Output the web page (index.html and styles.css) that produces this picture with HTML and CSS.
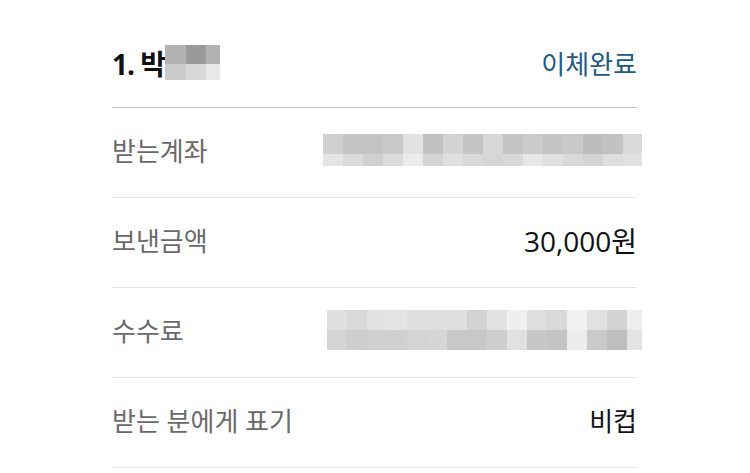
FILE: index.html
```html
<!DOCTYPE html>
<html lang="ko">
<head>
    <meta charset="UTF-8">
    <meta name="viewport" content="width=device-width, initial-scale=1.0">
    <title>이체 결과</title>
    <link rel="stylesheet" href="styles.css">
</head>
<body>

<div class="transfer">
    <div class="transfer-head">
        <div class="recipient">
            <span class="recipient-name">1. 박</span>
            <!-- masked name -->
            <svg class="mask mask-name" width="55" height="35" viewBox="0 0 55 35" shape-rendering="crispEdges">
                <rect x="0" y="0" width="21" height="19" fill="#b3b3b3"/>
                <rect x="21" y="0" width="20" height="19" fill="#9a9a9a"/>
                <rect x="41" y="0" width="14" height="19" fill="#b3b3b3"/>
                <rect x="0" y="19" width="21" height="16" fill="#cacaca"/>
                <rect x="21" y="19" width="20" height="16" fill="#d7d7d7"/>
                <rect x="41" y="19" width="14" height="16" fill="#e8e8e8"/>
            </svg>
        </div>
        <span class="status">이체완료</span>
    </div>

    <div class="detail-row">
        <span class="label">받는계좌</span>
        <!-- masked account number -->
        <svg class="mask mask-account" width="319" height="32" viewBox="0 0 319 32" shape-rendering="crispEdges">
            <g>
                <rect x="0" y="0" width="20" height="20" fill="#cfcfcf"/>
                <rect x="20" y="0" width="20" height="20" fill="#c4c4c4"/>
                <rect x="40" y="0" width="20" height="20" fill="#c3c3c3"/>
                <rect x="60" y="0" width="20" height="20" fill="#c9c9c9"/>
                <rect x="80" y="0" width="20" height="20" fill="#e2e2e2"/>
                <rect x="100" y="0" width="20" height="20" fill="#c1c1c1"/>
                <rect x="120" y="0" width="20" height="20" fill="#d3d3d3"/>
                <rect x="140" y="0" width="20" height="20" fill="#c4c4c4"/>
                <rect x="160" y="0" width="20" height="20" fill="#d7d7d7"/>
                <rect x="180" y="0" width="20" height="20" fill="#c4c4c4"/>
                <rect x="200" y="0" width="20" height="20" fill="#cbcbcb"/>
                <rect x="220" y="0" width="20" height="20" fill="#c4c4c4"/>
                <rect x="240" y="0" width="20" height="20" fill="#c9c9c9"/>
                <rect x="260" y="0" width="20" height="20" fill="#bdbdbd"/>
                <rect x="280" y="0" width="20" height="20" fill="#c2c2c2"/>
                <rect x="300" y="0" width="19" height="20" fill="#dadada"/>
            </g>
            <g>
                <rect x="0" y="20" width="20" height="12" fill="#e4e4e4"/>
                <rect x="20" y="20" width="20" height="12" fill="#dadada"/>
                <rect x="40" y="20" width="20" height="12" fill="#cfcfcf"/>
                <rect x="60" y="20" width="20" height="12" fill="#dcdcdc"/>
                <rect x="80" y="20" width="20" height="12" fill="#ebebeb"/>
                <rect x="100" y="20" width="20" height="12" fill="#d4d4d4"/>
                <rect x="120" y="20" width="20" height="12" fill="#dfdfdf"/>
                <rect x="140" y="20" width="20" height="12" fill="#d9d9d9"/>
                <rect x="160" y="20" width="20" height="12" fill="#d6d6d6"/>
                <rect x="180" y="20" width="20" height="12" fill="#d8d8d8"/>
                <rect x="200" y="20" width="20" height="12" fill="#e7e7e7"/>
                <rect x="220" y="20" width="20" height="12" fill="#e0e0e0"/>
                <rect x="240" y="20" width="20" height="12" fill="#d8d8d8"/>
                <rect x="260" y="20" width="20" height="12" fill="#d3d3d3"/>
                <rect x="280" y="20" width="20" height="12" fill="#dedede"/>
                <rect x="300" y="20" width="19" height="12" fill="#e2e2e2"/>
            </g>
        </svg>
    </div>

    <div class="detail-row">
        <span class="label">보낸금액</span>
        <span class="value amount">30,000원</span>
    </div>

    <div class="detail-row">
        <span class="label">수수료</span>
        <!-- masked fee -->
        <svg class="mask mask-fee" width="315" height="40" viewBox="0 0 315 40" shape-rendering="crispEdges">
            <g>
                <rect x="0" y="0" width="20" height="20" fill="#e0e0e0"/>
                <rect x="20" y="0" width="20" height="20" fill="#d9d9d9"/>
                <rect x="40" y="0" width="20" height="20" fill="#e2e2e2"/>
                <rect x="60" y="0" width="20" height="20" fill="#e3e3e3"/>
                <rect x="80" y="0" width="20" height="20" fill="#dfdfdf"/>
                <rect x="100" y="0" width="20" height="20" fill="#dedede"/>
                <rect x="120" y="0" width="20" height="20" fill="#dfdfdf"/>
                <rect x="140" y="0" width="20" height="20" fill="#d2d2d2"/>
                <rect x="160" y="0" width="20" height="20" fill="#e2e2e2"/>
                <rect x="180" y="0" width="20" height="20" fill="#efefef"/>
                <rect x="200" y="0" width="20" height="20" fill="#dedede"/>
                <rect x="220" y="0" width="20" height="20" fill="#d9d9d9"/>
                <rect x="240" y="0" width="20" height="20" fill="#f0f0f0"/>
                <rect x="260" y="0" width="20" height="20" fill="#e1e1e1"/>
                <rect x="280" y="0" width="20" height="20" fill="#d3d3d3"/>
                <rect x="300" y="0" width="15" height="20" fill="#ededed"/>
            </g>
            <g>
                <rect x="0" y="20" width="20" height="20" fill="#d4d4d4"/>
                <rect x="20" y="20" width="20" height="20" fill="#cecece"/>
                <rect x="40" y="20" width="20" height="20" fill="#cfcfcf"/>
                <rect x="60" y="20" width="20" height="20" fill="#cfcfcf"/>
                <rect x="80" y="20" width="20" height="20" fill="#d4d4d4"/>
                <rect x="100" y="20" width="20" height="20" fill="#d6d6d6"/>
                <rect x="120" y="20" width="20" height="20" fill="#c8c8c8"/>
                <rect x="140" y="20" width="20" height="20" fill="#c8c8c8"/>
                <rect x="160" y="20" width="20" height="20" fill="#cecece"/>
                <rect x="180" y="20" width="20" height="20" fill="#e1e1e1"/>
                <rect x="200" y="20" width="20" height="20" fill="#c7c7c7"/>
                <rect x="220" y="20" width="20" height="20" fill="#c4c4c4"/>
                <rect x="240" y="20" width="20" height="20" fill="#ececec"/>
                <rect x="260" y="20" width="20" height="20" fill="#cacaca"/>
                <rect x="280" y="20" width="20" height="20" fill="#bfbfbf"/>
                <rect x="300" y="20" width="15" height="20" fill="#e3e3e3"/>
            </g>
        </svg>
    </div>

    <div class="detail-row">
        <span class="label">받는 분에게 표기</span>
        <span class="value">비컵</span>
    </div>
</div>

</body>
</html>
```

FILE: styles.css
```css
body {
    font-family: "Open Sans", "Noto Sans CJK KR", sans-serif;
    background-color: #fff;
    margin: 0;
    padding: 0;
}
.transfer {
    width: 525px;
    margin-left: 112px;
}
.transfer-head {
    display: flex;
    justify-content: space-between;
    align-items: center;
    border-bottom: 1px solid #c4c4c4;
    box-sizing: border-box;
    height: 108px;
    padding-top: 18px;
}
.recipient {
    display: flex;
    align-items: center;
}
.recipient-name {
    font-size: 28px;
    font-weight: bold;
    color: #111;
    letter-spacing: -1px;
}
.mask {
    display: block;
}
.status {
    font-size: 26px;
    color: #1b5a86;
}
.detail-row {
    display: flex;
    justify-content: space-between;
    align-items: center;
    height: 90px;
    box-sizing: border-box;
    border-bottom: 1px solid #e6e6e6;
    padding-bottom: 6px;
}
.label {
    font-size: 26px;
    color: #6a6a6a;
}
.value {
    font-size: 26px;
    color: #111;
}
.amount {
    font-size: 28px;
}
.mask-account,
.mask-fee {
    margin-right: -5px;
}
```
